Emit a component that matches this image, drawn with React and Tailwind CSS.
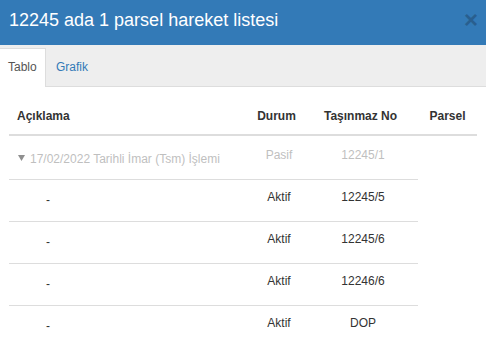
import React from "react";

const rows = [
  { durum: "Aktif", no: "12245/5" },
  { durum: "Aktif", no: "12245/6" },
  { durum: "Aktif", no: "12246/6" },
  { durum: "Aktif", no: "DOP" },
];

export default function App() {
  return (
    <div
      className="w-[486px] h-[356px] overflow-hidden bg-white text-[#333] text-[12px]"
      style={{ fontFamily: '"Liberation Sans", Arial, sans-serif' }}
    >
      {/* Header */}
      <div className="h-[45px] bg-[#337ab7] flex items-start justify-between pl-[9px] pr-[8px]">
        <div className="pt-[10px] text-[18px] leading-[20px] text-white">
          12245 ada 1 parsel hareket listesi
        </div>
        <div className="pt-[8px] text-[24px] leading-[24px] font-bold text-[#295f8f]">
          ×
        </div>
      </div>

      {/* Tabs */}
      <div className="h-[42px] bg-[#eeeeee] pt-[3px] border-b border-[#dddddd] flex items-start">
        <div className="h-[39px] w-[46px] bg-white border-t border-r border-[#dddddd] pl-[8px] flex items-center leading-[17px] text-[#555] pb-[1px]">
          Tablo
        </div>
        <div className="h-[38px] pl-[10px] flex items-center leading-[17px] text-[#337ab7]">
          Grafik
        </div>
      </div>

      {/* Table */}
      <div className="px-[9px] pt-[13px]">
        <div className="w-[468px] grid grid-cols-[241px_53px_115px_59px] border-b-2 border-[#dddddd] font-bold leading-[17px]">
          <div className="pl-[8px] pt-[8px] pb-[9px]">Açıklama</div>
          <div className="text-center pt-[8px] pb-[9px]">Durum</div>
          <div className="text-center pt-[8px] pb-[9px]">Taşınmaz No</div>
          <div className="text-center pt-[8px] pb-[9px]">Parsel</div>
        </div>

        <div className="w-[409px] grid grid-cols-[241px_53px_115px] h-[44px] border-b border-[#dddddd] leading-[17px] text-[#bfbfbf]">
          <div className="pl-[9px] pt-[15px] flex items-center self-start">
            <svg width="7" height="6" viewBox="0 0 7 6" className="mr-[5px] mb-[4px] shrink-0">
              <path d="M0 0 H7 L3.5 6 Z" fill="#8f8f8f" />
            </svg>
            <span>17/02/2022 Tarihli İmar (Tsm) İşlemi</span>
          </div>
          <div className="pt-[11px] pl-[5px] text-center">Pasif</div>
          <div className="pt-[11px] pl-[5px] text-center">12245/1</div>
        </div>

        {rows.map((r, i) => (
          <div
            key={i}
            className={
              i === rows.length - 1
                ? "w-[409px] grid grid-cols-[241px_53px_115px] h-[42px] leading-[17px]"
                : "w-[409px] grid grid-cols-[241px_53px_115px] h-[42px] border-b border-[#dddddd] leading-[17px]"
            }
          >
            <div className="pl-[37px] pt-[12px]">-</div>
            <div className="pt-[9px] pl-[5px] text-center">{r.durum}</div>
            <div className="pt-[9px] pl-[5px] text-center">{r.no}</div>
          </div>
        ))}
      </div>
    </div>
  );
}
